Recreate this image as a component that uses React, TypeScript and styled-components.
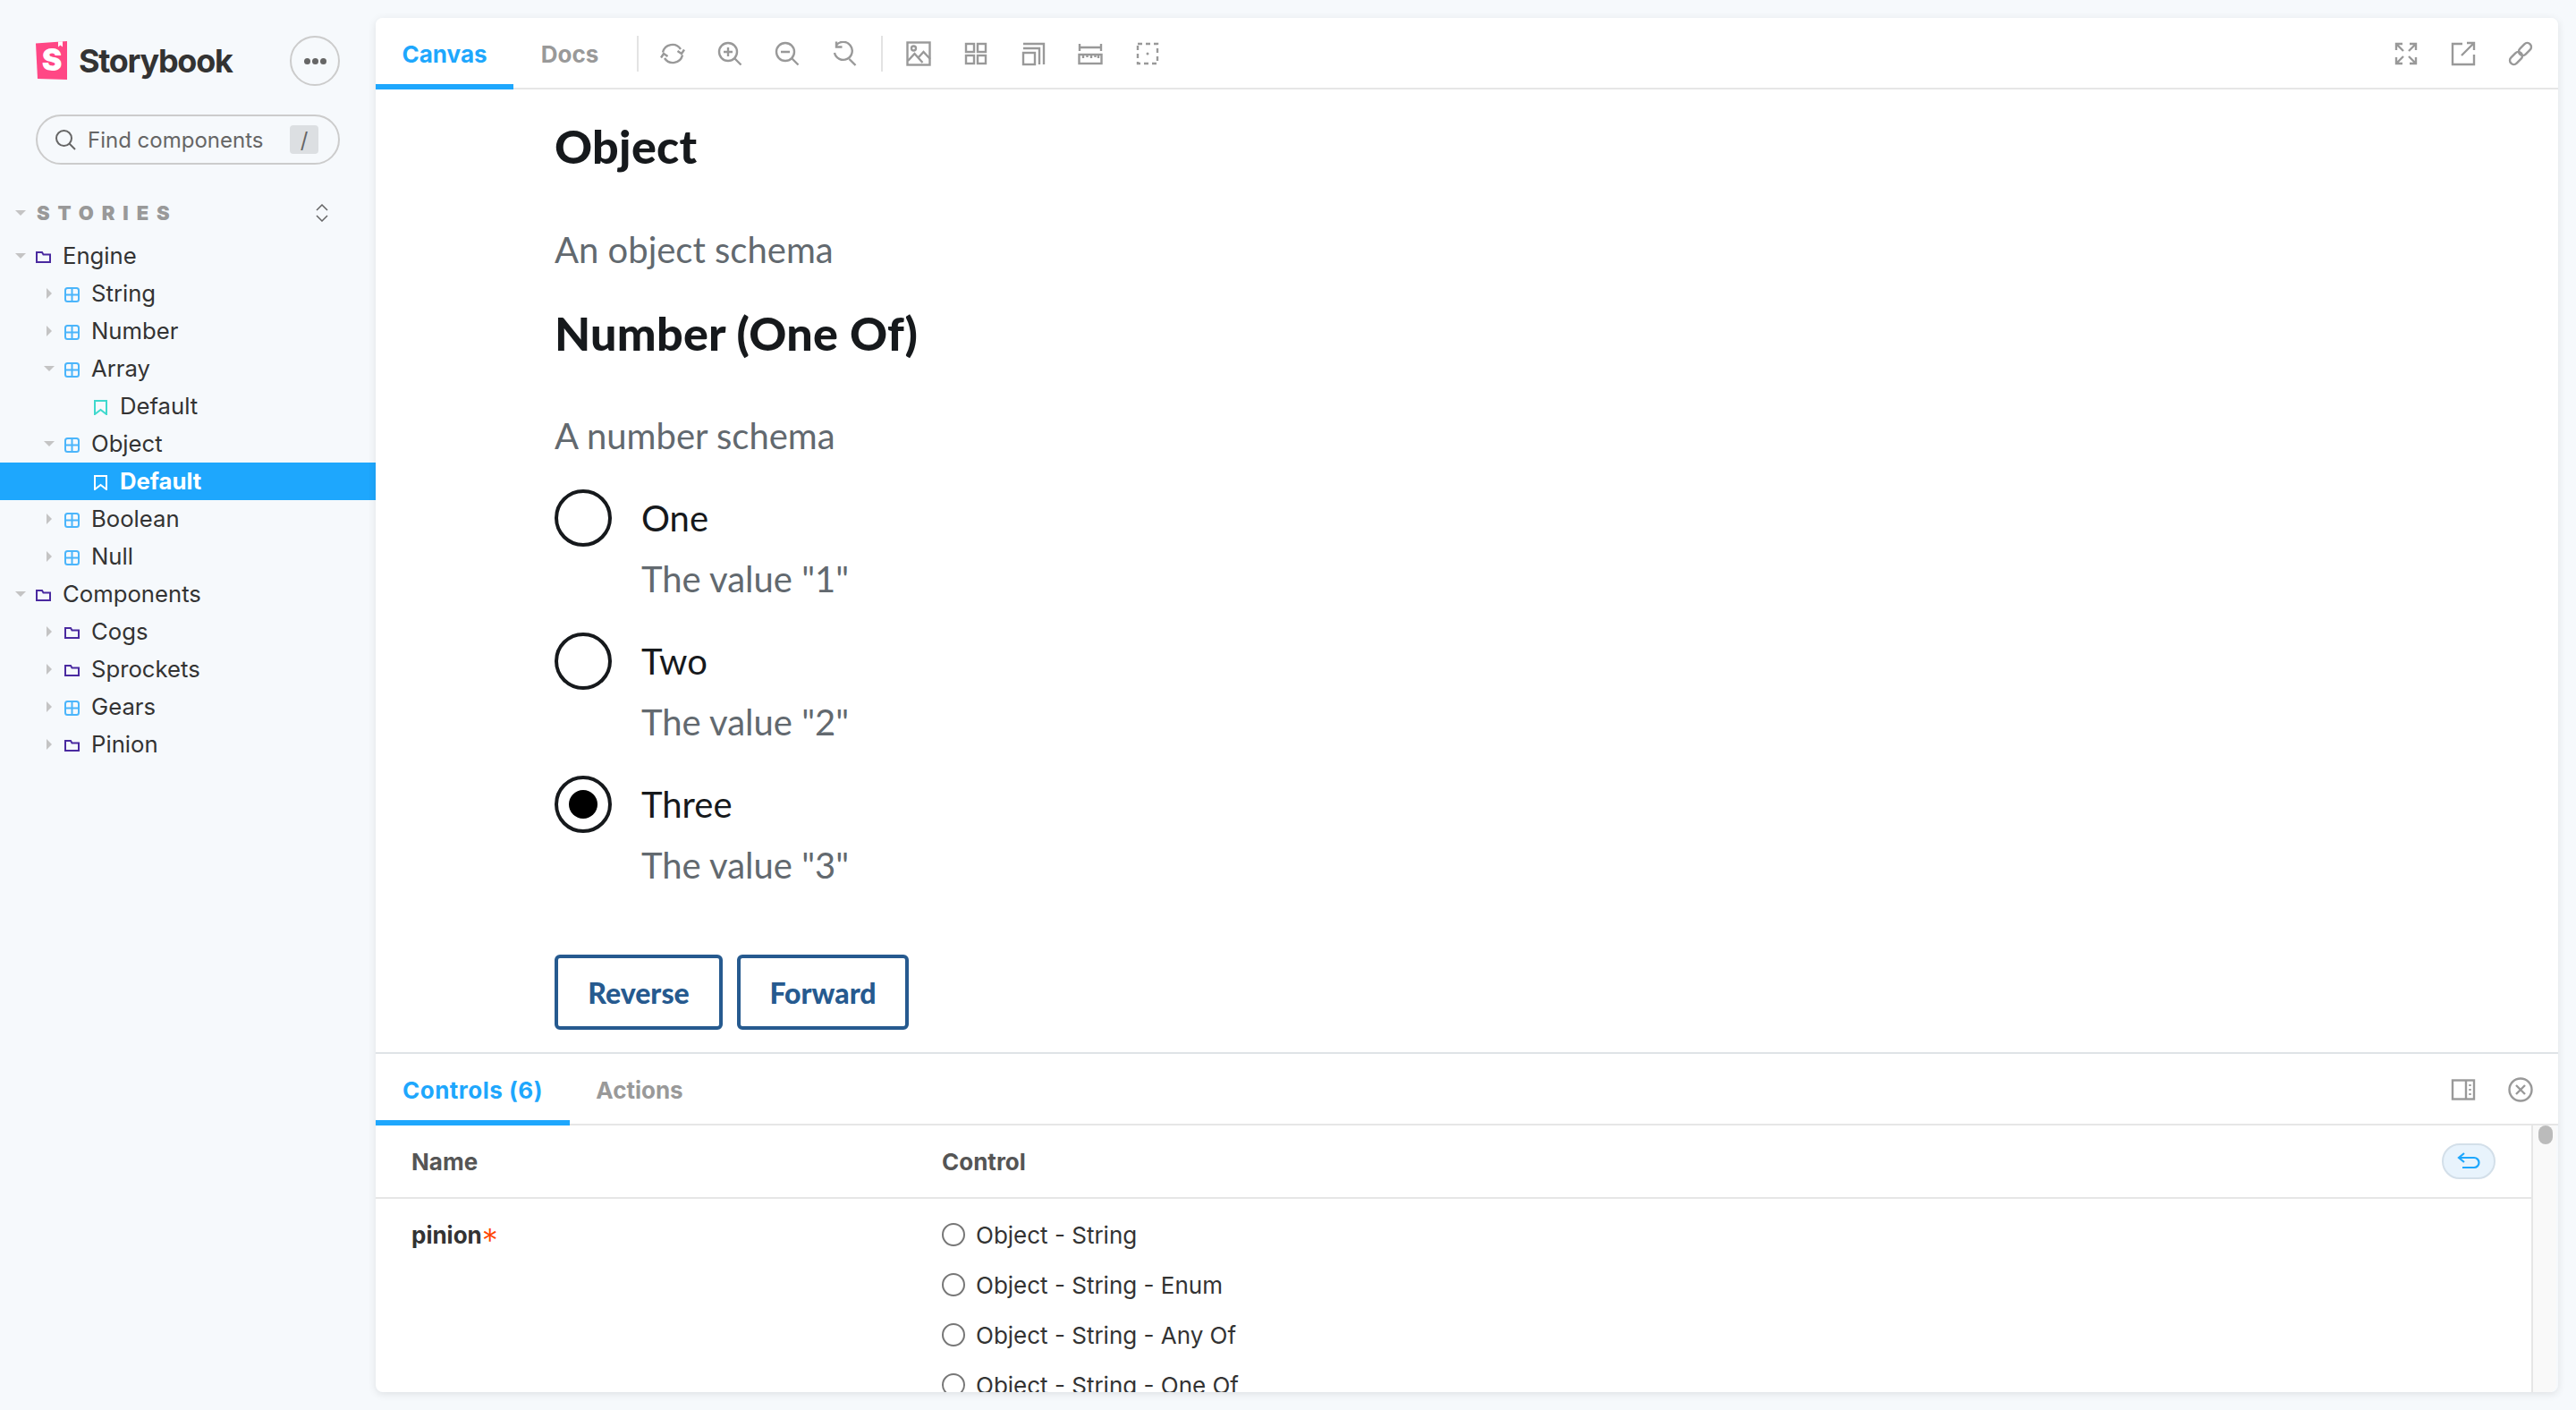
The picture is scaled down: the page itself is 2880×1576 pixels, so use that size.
import React from 'react';
import styled, { createGlobalStyle } from 'styled-components';

const GlobalStyle = createGlobalStyle`
  html, body {
    margin: 0;
    padding: 0;
    background: #f6f9fc;
    font-family: Inter, "Open Sans", sans-serif;
  }
  * { box-sizing: border-box; }
`;

const Page = styled.div`
  display: flex;
  width: 2880px;
  height: 1576px;
  overflow: hidden;
  background: #f6f9fc;
`;

/* sidebar */

const Sidebar = styled.aside`
  width: 420px;
  flex: none;
  padding-top: 40px;
`;

const Brand = styled.div`
  display: flex;
  align-items: center;
  justify-content: space-between;
  height: 56px;
  padding: 0 40px;
`;

const BrandName = styled.div`
  display: flex;
  align-items: center;
  gap: 12px;
  font-size: 36px;
  font-weight: 700;
  letter-spacing: -1.3px;
  color: #333;
`;

const MenuButton = styled.button`
  width: 56px;
  height: 56px;
  border: 2px solid #ccc;
  border-radius: 50%;
  background: transparent;
  display: flex;
  align-items: center;
  justify-content: center;
  gap: 2px;
  padding: 0;
`;

const MenuDot = styled.span`
  width: 7px;
  height: 7px;
  border-radius: 50%;
  background: #666;
`;

const SearchBox = styled.div`
  display: flex;
  align-items: center;
  height: 56px;
  margin: 32px 40px 0;
  padding: 0 22px 0 19px;
  border: 2px solid #ccc;
  border-radius: 28px;
  font-size: 24px;
  color: #666;
`;

const SearchText = styled.span`
  flex: 1;
  margin-left: 13px;
`;

const SlashKey = styled.span`
  width: 32px;
  height: 32px;
  border-radius: 4px;
  background: #dcdfe2;
  display: flex;
  align-items: center;
  justify-content: center;
  font-size: 24px;
  color: #666;
`;

const SectionHeader = styled.div`
  display: flex;
  align-items: center;
  height: 42px;
  margin-top: 33px;
  margin-bottom: 6px;
  padding: 0 53px 0 17px;
`;

const SectionTitle = styled.span`
  flex: 1;
  margin-left: 12px;
  font-size: 22px;
  font-weight: 900;
  letter-spacing: 8.9px;
  color: #999;
`;

const Row = styled.div<{ $depth: number; $selected?: boolean }>`
  display: flex;
  align-items: center;
  height: 42px;
  padding-left: ${(p) => 12 + p.$depth * 32}px;
  padding-bottom: 1px;
  font-size: 25.7px;
  font-weight: ${(p) => (p.$selected ? 700 : 400)};
  color: ${(p) => (p.$selected ? '#fff' : '#333')};
  background: ${(p) => (p.$selected ? '#1ea7fd' : 'transparent')};
`;

const CaretSlot = styled.span`
  width: 28px;
  flex: none;
  display: flex;
  justify-content: center;
  padding-right: 6px;
`;

const Caret = styled.span<{ $open: boolean }>`
  width: 0;
  height: 0;
  border-style: solid;
  border-color: transparent;
  ${(p) =>
    p.$open
      ? `border-width: 6px 6px 0 6px; border-top-color: #c4c4c4;`
      : `border-width: 6px 0 6px 6px; border-left-color: #c4c4c4;`}
`;

const RowIcon = styled.svg`
  width: 17px;
  height: 17px;
  flex: none;
  margin-right: 13px;
  margin-top: 3px;
`;

/* main card */

const Card = styled.main`
  flex: 1;
  margin: 20px 20px 20px 0;
  display: flex;
  flex-direction: column;
  border-radius: 8px;
  overflow: hidden;
  box-shadow: rgba(0, 0, 0, 0.1) 0 2px 10px 0;
`;

const Bar = styled.div`
  display: flex;
  align-items: stretch;
  height: 80px;
  flex: none;
  background: #fff;
  border-bottom: 2px solid #e6e6e6;
`;

const Tab = styled.div<{ $active?: boolean; $width: number; $tracking?: number }>`
  width: ${(p) => p.$width}px;
  height: 80px;
  display: flex;
  align-items: center;
  justify-content: center;
  font-size: 26px;
  font-weight: 700;
  letter-spacing: ${(p) => p.$tracking ?? 0}px;
  color: ${(p) => (p.$active ? '#1ea7fd' : '#999')};
  border-bottom: 6px solid ${(p) => (p.$active ? '#1ea7fd' : 'transparent')};
  padding-top: 6px;
`;

const Separator = styled.span<{ $left: number; $right: number }>`
  width: 2px;
  height: 40px;
  align-self: center;
  margin: 2px ${(p) => p.$right}px 0 ${(p) => p.$left}px;
  background: #e3e3e3;
`;

const ToolButton = styled.div`
  width: 64px;
  padding-top: 2px;
  display: flex;
  align-items: center;
  justify-content: center;
`;

const ToolIcon = styled.svg`
  width: 28px;
  height: 28px;
  fill: none;
  stroke: #999;
  stroke-width: 2.4;
`;

const Spacer = styled.div`
  flex: 1;
`;

const RightTools = styled.div`
  display: flex;
  align-items: stretch;
  margin-right: 10px;
`;

const Preview = styled.section`
  height: 1078px;
  flex: none;
  background: #fff;
  padding: 33px 0 0 200px;
  border-bottom: 2px solid #dfe3e7;
  overflow: hidden;
  font-family: Lato, "Open Sans", sans-serif;
`;

const Heading = styled.h2<{ $top: number }>`
  margin: ${(p) => p.$top}px 0 0;
  font-size: 52px;
  line-height: 60px;
  font-weight: 900;
  letter-spacing: 0.3px;
  color: #16191c;
`;

const Description = styled.p<{ $top: number }>`
  margin: ${(p) => p.$top}px 0 0;
  font-size: 40px;
  line-height: 48px;
  color: #62696f;
`;

const Options = styled.div`
  margin-top: 36px;
  display: flex;
  flex-direction: column;
  gap: 36px;
`;

const OptionTop = styled.div`
  display: flex;
  align-items: center;
  gap: 33px;
  font-size: 40px;
  color: #16191c;
`;

const BigRadio = styled.span<{ $checked?: boolean }>`
  width: 64px;
  height: 64px;
  border: 4px solid #16191c;
  border-radius: 50%;
  display: flex;
  align-items: center;
  justify-content: center;
  &::after {
    content: '';
    width: 32px;
    height: 32px;
    border-radius: 50%;
    background: #000;
    display: ${(p) => (p.$checked ? 'block' : 'none')};
  }
`;

const OptionHint = styled.div`
  margin: 12px 0 0 97px;
  font-size: 40px;
  line-height: 48px;
  color: #62696f;
`;

const Buttons = styled.div`
  display: flex;
  gap: 16px;
  margin-top: 76px;
`;

const OutlineButton = styled.button<{ $width: number }>`
  width: ${(p) => p.$width}px;
  height: 84px;
  background: #fff;
  border: 4px solid #265a8f;
  border-radius: 6px;
  color: #265a8f;
  font-family: Lato, "Open Sans", sans-serif;
  font-size: 32px;
  font-weight: 900;
`;

const AddonBody = styled.div`
  flex: 1;
  min-height: 0;
  display: flex;
  margin-right: 2px;
  background: #fff;
  border-bottom-right-radius: 8px;
  border-bottom-left-radius: 8px;
  overflow: hidden;
`;

const ControlsTable = styled.div`
  flex: 1;
  min-width: 0;
`;

const TableHead = styled.div`
  display: flex;
  align-items: center;
  height: 82px;
  padding: 0 40px;
  border-bottom: 2px solid #e6e6e6;
  font-size: 26px;
  font-weight: 700;
  color: #555;
`;

const NameCell = styled.div`
  width: 593px;
  flex: none;
`;

const ResetPill = styled.div`
  width: 60px;
  height: 40px;
  border-radius: 20px;
  border: 2px solid #d3dfe9;
  background: #e8f3fc;
  display: flex;
  align-items: center;
  justify-content: center;
`;

const TableRow = styled.div`
  display: flex;
  padding: 12px 40px 0;
`;

const ArgName = styled(NameCell)`
  height: 56px;
  display: flex;
  align-items: center;
  font-size: 26px;
  font-weight: 700;
  color: #333;
`;

const Required = styled.span`
  color: #ff4400;
  font-weight: 300;
  font-size: 36px;
  line-height: 26px;
  margin-top: 12px;
`;

const ChoiceList = styled.div`
  display: flex;
  flex-direction: column;
`;

const Choice = styled.div`
  height: 56px;
  display: flex;
  align-items: center;
  gap: 12px;
  font-size: 26px;
  color: #333;
`;

const SmallRadio = styled.span`
  width: 26px;
  height: 26px;
  border: 2px solid #777;
  border-radius: 50%;
`;

const ScrollTrack = styled.div`
  width: 28px;
  flex: none;
  background: #f9f9f9;
  border-left: 2px solid #e6e6e6;
  padding: 0 4px 0 6px;
`;

const ScrollThumb = styled.div`
  height: 21px;
  background: #bbb;
  border-radius: 8px;
`;

const FolderIcon = () => (
  <RowIcon viewBox="0 0 17 17" fill="none" stroke="#4a2aa0" strokeWidth="2">
    <path d="M1 3h6l1.500 2.500H16V14H1z" />
  </RowIcon>
);

const ComponentIcon = () => (
  <RowIcon viewBox="0 0 17 17" fill="none" stroke="#4bb5fb" strokeWidth="2">
    <rect x="1" y="1" width="15" height="15" rx="2.500" />
    <path d="M8.500 1v15M1 8.500h15" />
  </RowIcon>
);

const StoryIcon = ({ light }: { light?: boolean }) => (
  <RowIcon viewBox="0 0 17 17" fill="none" stroke={light ? '#fff' : '#3fd9cd'} strokeWidth="2">
    <path d="M2 1h13v15l-6.500-5L2 16z" />
  </RowIcon>
);

const tree = [
  { label: 'Engine', depth: 0, kind: 'folder', caret: 'open' },
  { label: 'String', depth: 1, kind: 'component', caret: 'closed' },
  { label: 'Number', depth: 1, kind: 'component', caret: 'closed' },
  { label: 'Array', depth: 1, kind: 'component', caret: 'open' },
  { label: 'Default', depth: 2, kind: 'story' },
  { label: 'Object', depth: 1, kind: 'component', caret: 'open' },
  { label: 'Default', depth: 2, kind: 'story', selected: true },
  { label: 'Boolean', depth: 1, kind: 'component', caret: 'closed' },
  { label: 'Null', depth: 1, kind: 'component', caret: 'closed' },
  { label: 'Components', depth: 0, kind: 'folder', caret: 'open' },
  { label: 'Cogs', depth: 1, kind: 'folder', caret: 'closed' },
  { label: 'Sprockets', depth: 1, kind: 'folder', caret: 'closed' },
  { label: 'Gears', depth: 1, kind: 'component', caret: 'closed' },
  { label: 'Pinion', depth: 1, kind: 'folder', caret: 'closed' },
];

const Logo = () => (
  <svg width="36" height="46" viewBox="0 0 36 46">
    <path d="M0 3.500 35 1v43l-33-1z" fill="#ff4785" />
    <path d="M25 1.600v6l2.500-2 2.500 2V1.200z" fill="#fff" />
    <text x="17.500" y="34" textAnchor="middle" fontFamily="Inter, sans-serif" fontWeight="900" fontSize="34" fill="#fff">
      S
    </text>
  </svg>
);

const toolbarLeft = [
  <>
    <path d="M3 12.500A11 11 0 0 1 23 9" />
    <path d="M25 15.500A11 11 0 0 1 5 19" />
    <path d="M19.500 11 24 14l3-4.500" />
    <path d="M8.500 17 4 14l-3 4.500" />
  </>,
  <>
    <circle cx="12" cy="12" r="10" />
    <path d="M19 19l7.500 7.500M7 12h10M12 7v10" />
  </>,
  <>
    <circle cx="12" cy="12" r="10" />
    <path d="M19 19l7.500 7.500M7 12h10" />
  </>,
  <>
    <path d="M5 4.500A10 10 0 1 1 3 13" />
    <path d="M19.500 20l7 7M5 0.500V6.500h6.500" />
  </>,
];

const toolbarRight = [
  <>
    <rect x="1.500" y="1.500" width="25" height="25" />
    <circle cx="8.500" cy="8" r="2.500" />
    <path d="M2 22l7.500-8 9 10M14 18l5.500-6 7.500 8" />
  </>,
  <>
    <rect x="3" y="3" width="9" height="9" />
    <rect x="16" y="3" width="9" height="9" />
    <rect x="3" y="16" width="9" height="9" />
    <rect x="16" y="16" width="9" height="9" />
  </>,
  <>
    <rect x="3" y="13" width="13" height="13" />
    <path d="M3 8h18v18M3 3h23v23" />
  </>,
  <>
    <path d="M2 3v8M26 3v8M2 7h24" />
    <rect x="1.500" y="15" width="25" height="10" />
    <path d="M6 15v4M10.500 15v3M15 15v4M19.500 15v3M23 15v4" />
  </>,
  <>
    <rect x="3" y="3" width="22" height="22" strokeDasharray="5 4" />
    <circle cx="14" cy="14" r="1.500" fill="#999" stroke="none" />
  </>,
];

const toolbarEnd = [
  <>
    <path d="M3 10V3h7M3 3l8 8M18 3h7v7M25 3l-8 8M3 18v7h7M3 25l8-8M25 18v7h-7M25 25l-8-8" />
  </>,
  <>
    <path d="M13 3H2v23h24V15" />
    <path d="M12 16 26 2M18 2h8v8" />
  </>,
  <>
    <rect x="-8" y="-4.500" width="16" height="9" rx="4.500" transform="translate(9 19) rotate(-45)" />
    <rect x="-8" y="-4.500" width="16" height="9" rx="4.500" transform="translate(19 9) rotate(-45)" />
  </>,
];

const choices = ['Object - String', 'Object - String - Enum', 'Object - String - Any Of', 'Object - String - One Of'];

const App = () => {
  return (
    <Page>
      <GlobalStyle />
      <Sidebar>
        <Brand>
          <BrandName>
            <Logo />
            Storybook
          </BrandName>
          <MenuButton>
            <MenuDot />
            <MenuDot />
            <MenuDot />
          </MenuButton>
        </Brand>
        <SearchBox>
          <svg width="24" height="24" viewBox="0 0 24 24" fill="none" stroke="#666" strokeWidth="2">
            <circle cx="10.500" cy="10.500" r="8.500" />
            <path d="M16.500 16.500 23 23" />
          </svg>
          <SearchText>Find components</SearchText>
          <SlashKey>/</SlashKey>
        </SearchBox>
        <SectionHeader>
          <Caret $open={true} />
          <SectionTitle>STORIES</SectionTitle>
          <svg width="14" height="20" viewBox="0 0 14 20" fill="none" stroke="#666" strokeWidth="1.500">
            <path d="M1 7l6-6 6 6M1 13l6 6 6-6" />
          </svg>
        </SectionHeader>
        {tree.map((item, i) => (
          <Row key={i} $depth={item.depth} $selected={item.selected}>
            <CaretSlot>{item.caret && <Caret $open={item.caret === 'open'} />}</CaretSlot>
            {item.kind === 'folder' && <FolderIcon />}
            {item.kind === 'component' && <ComponentIcon />}
            {item.kind === 'story' && <StoryIcon light={item.selected} />}
            {item.label}
          </Row>
        ))}
      </Sidebar>

      <Card>
        <Bar>
          <Tab $active $width={154}>Canvas</Tab>
          <Tab $width={126}>Docs</Tab>
          <Separator $left={12} $right={6} />
          {toolbarLeft.map((icon, i) => (
            <ToolButton key={i}>
              <ToolIcon viewBox="0 0 28 28">{icon}</ToolIcon>
            </ToolButton>
          ))}
          <Separator $left={9} $right={8} />
          {toolbarRight.map((icon, i) => (
            <ToolButton key={i}>
              <ToolIcon viewBox="0 0 28 28">{icon}</ToolIcon>
            </ToolButton>
          ))}
          <Spacer />
          <RightTools>
            {toolbarEnd.map((icon, i) => (
              <ToolButton key={i}>
                <ToolIcon viewBox="0 0 28 28">{icon}</ToolIcon>
              </ToolButton>
            ))}
          </RightTools>
        </Bar>

        <Preview>
          <Heading $top={0}>Object</Heading>
          <Description $top={62}>An object schema</Description>
          <Heading $top={39}>Number (One Of)</Heading>
          <Description $top={61}>A number schema</Description>
          <Options>
            {['One', 'Two', 'Three'].map((name, i) => (
              <div key={name}>
                <OptionTop>
                  <BigRadio $checked={i === 2} />
                  {name}
                </OptionTop>
                <OptionHint>The value "{i + 1}"</OptionHint>
              </div>
            ))}
          </Options>
          <Buttons>
            <OutlineButton $width={188}>Reverse</OutlineButton>
            <OutlineButton $width={192}>Forward</OutlineButton>
          </Buttons>
        </Preview>

        <Bar>
          <Tab $active $width={217} $tracking={0.5}>Controls (6)</Tab>
          <Tab $width={156}>Actions</Tab>
          <Spacer />
          <RightTools>
            <ToolButton>
              <ToolIcon viewBox="0 0 28 28">
                <rect x="2" y="3.500" width="24" height="21" />
                <path d="M17 3.500v21M21.500 8v2M21.500 13v2M21.500 18v2" />
              </ToolIcon>
            </ToolButton>
            <ToolButton>
              <ToolIcon viewBox="0 0 28 28">
                <circle cx="14" cy="14" r="12.500" />
                <path d="M9 9l10 10M19 9 9 19" />
              </ToolIcon>
            </ToolButton>
          </RightTools>
        </Bar>

        <AddonBody>
          <ControlsTable>
            <TableHead>
              <NameCell>Name</NameCell>
              <Spacer>Control</Spacer>
              <ResetPill>
                <svg width="26" height="20" viewBox="0 0 26 20" fill="none" stroke="#1ea7fd" strokeWidth="2.200">
                  <path d="M8 1 2 6l6 5M2 6h17a5 5 0 0 1 0 11H6" />
                </svg>
              </ResetPill>
            </TableHead>
            <TableRow>
              <ArgName>
                pinion<Required>*</Required>
              </ArgName>
              <ChoiceList>
                {choices.map((c) => (
                  <Choice key={c}>
                    <SmallRadio />
                    {c}
                  </Choice>
                ))}
              </ChoiceList>
            </TableRow>
          </ControlsTable>
          <ScrollTrack>
            <ScrollThumb />
          </ScrollTrack>
        </AddonBody>
      </Card>
    </Page>
  );
};

export default App;
